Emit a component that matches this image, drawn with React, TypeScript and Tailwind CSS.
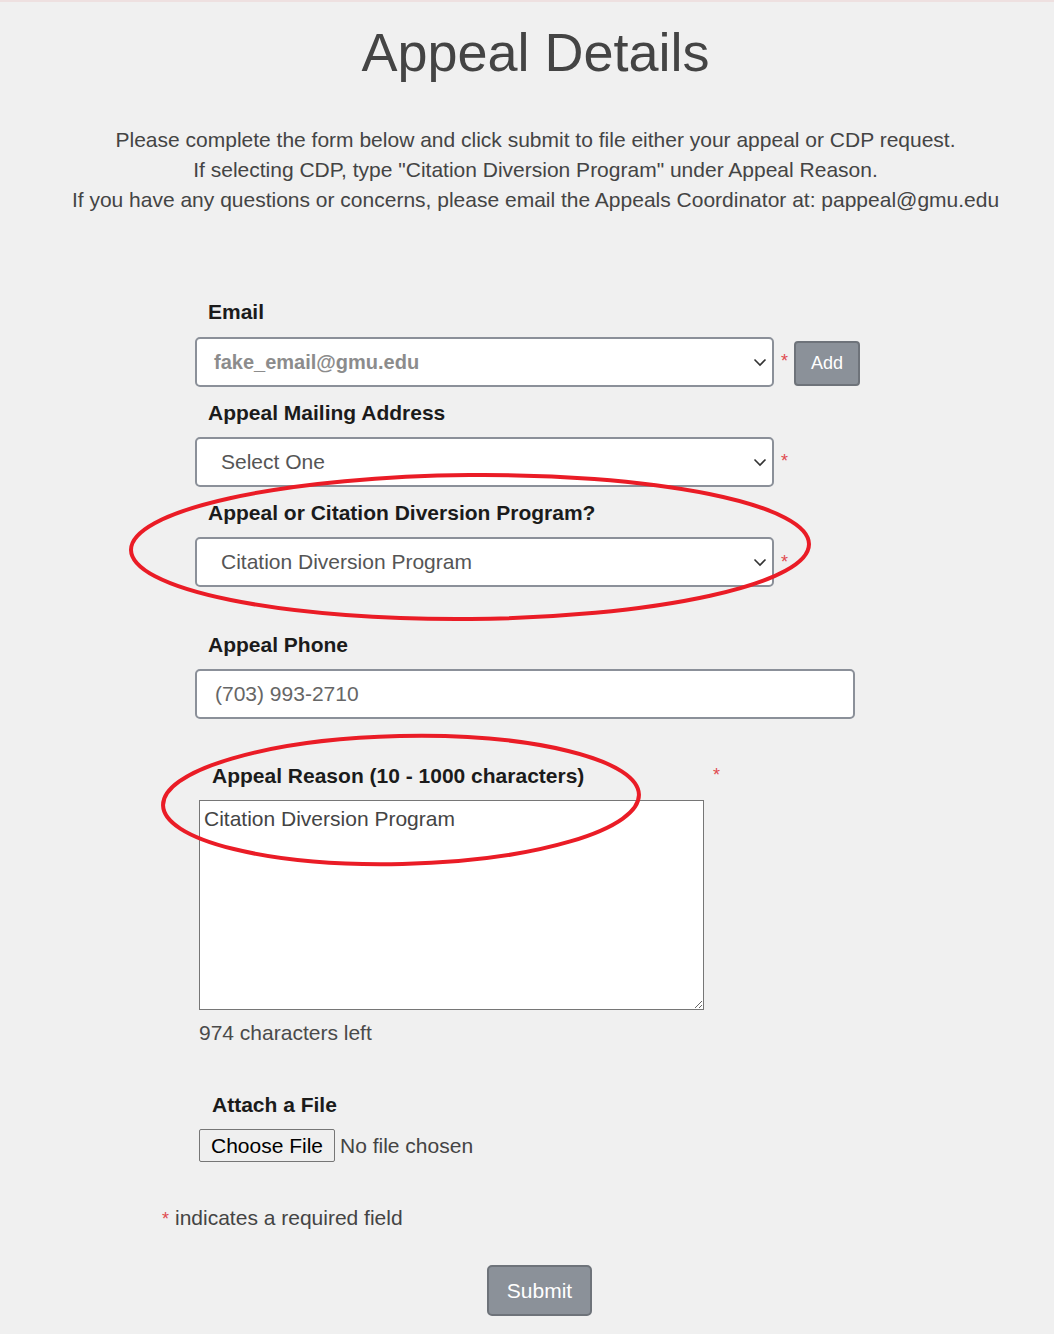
import React from "react";

function Chevron(): React.JSX.Element {
  return (
    <svg width="14" height="9" viewBox="0 0 14 9" fill="none" className="shrink-0">
      <path d="M1.5 1.5 7 7l5.5-5.5" stroke="#333" strokeWidth="1.6" />
    </svg>
  );
}

function Required({ className = "" }: { className?: string }): React.JSX.Element {
  return <span className={`text-[18px] leading-none text-[#e04a4f] ${className}`}>*</span>;
}

function Label({ children, className = "" }: { children: React.ReactNode; className?: string }) {
  return (
    <div className={`pl-[13px] text-[21px] leading-[24px] font-bold text-[#1b1b1b] ${className}`}>
      {children}
    </div>
  );
}

function FakeSelect({
  value,
  textClass,
}: {
  value: string;
  textClass: string;
}): React.JSX.Element {
  return (
    <div className="flex h-[50px] w-[579px] items-center justify-between rounded-[5px] border-2 border-[#8b9099] bg-white pr-[5px]">
      <span className={textClass}>{value}</span>
      <Chevron />
    </div>
  );
}

export default function App(): React.JSX.Element {
  return (
    <div className="relative min-h-screen bg-[#f0f0f0] pb-[18px] font-['Liberation_Sans',Arial,sans-serif]">
      {/* Top strip */}
      <div className="h-[2px] bg-[#eee0e0]" />

      <h1 className="mt-[23px] pl-[17px] text-center text-[54px] leading-none font-normal text-[#444]">
        Appeal Details
      </h1>

      <div className="mt-[46px] pl-[17px] text-center text-[21px] leading-[30px] text-[#444]">
        <p>Please complete the form below and click submit to file either your appeal or CDP request.</p>
        <p>If selecting CDP, type "Citation Diversion Program" under Appeal Reason.</p>
        <p>If you have any questions or concerns, please email the Appeals Coordinator at: pappeal@gmu.edu</p>
      </div>

      <form className="mt-[85px] pl-[195px]">
        {/* Email */}
        <Label>Email</Label>
        <div className="mt-[13px] flex items-start">
          <FakeSelect value="fake_email@gmu.edu" textClass="pl-[17px] text-[20px] font-bold text-[#8c8c8c]" />
          <Required className="mt-[15px] w-[20px] pl-[7px]" />
          <button
            type="button"
            className="mt-[4px] h-[45px] w-[66px] rounded-[4px] border-2 border-[#6e737a] bg-[#8b9199] text-[18px] text-white"
          >
            Add
          </button>
        </div>

        {/* Mailing address */}
        <Label className="mt-[14px]">Appeal Mailing Address</Label>
        <div className="mt-[12px] flex items-start">
          <FakeSelect value="Select One" textClass="pl-[24px] text-[21px] text-[#555]" />
          <Required className="mt-[15px] pl-[7px]" />
        </div>

        {/* Appeal or CDP */}
        <Label className="mt-[14px]">Appeal or Citation Diversion Program?</Label>
        <div className="mt-[12px] flex items-start">
          <FakeSelect value="Citation Diversion Program" textClass="pl-[24px] text-[21px] text-[#555]" />
          <Required className="mt-[16px] pl-[7px]" />
        </div>

        {/* Phone */}
        <Label className="mt-[46px]">Appeal Phone</Label>
        <div className="mt-[12px] flex h-[50px] w-[660px] items-center rounded-[5px] border-2 border-[#8b9099] bg-white pl-[18px] text-[21px] text-[#666]">
          (703) 993-2710
        </div>

        {/* Appeal reason */}
        <div className="mt-[45px] pl-[4px]">
          <div className="flex w-[525px] items-start">
            <Label className="w-[505px]">Appeal Reason (10 - 1000 characters)</Label>
            <Required className="mt-[2px] pl-[9px]" />
          </div>
          <textarea
            readOnly
            defaultValue="Citation Diversion Program"
            className="mt-[12px] block h-[210px] w-[505px] border border-[#767676] bg-white px-[4px] pt-[6px] text-[21px] leading-[24px] text-[#444] outline-none"
          />
          <div className="mt-[11px] text-[21px] leading-[24px] text-[#4a4a4a]">974 characters left</div>

          <Label className="mt-[48px]">Attach a File</Label>
          <div className="mt-[12px] flex items-center">
            <button
              type="button"
              className="h-[33px] w-[136px] rounded-[2px] border border-[#767676] bg-[#efefef] text-[21px] text-black"
            >
              Choose File
            </button>
            <span className="ml-[5px] text-[21px] text-[#444]">No file chosen</span>
          </div>
        </div>
      </form>

      <div className="mt-[44px] flex items-start pl-[162px] text-[21px] leading-[24px] text-[#444]">
        <Required className="mt-[4px] w-[13px]" />
        <span>indicates a required field</span>
      </div>

      <div className="mt-[35px] pl-[487px]">
        <button
          type="button"
          className="h-[51px] w-[105px] rounded-[5px] border-2 border-[#6e737a] bg-[#8b9199] text-[21px] text-white"
        >
          Submit
        </button>
      </div>

      {/* Red annotation circles */}
      <svg className="pointer-events-none absolute top-0 left-0" width="1054" height="1334">
        <ellipse
          cx="470"
          cy="547"
          rx="339"
          ry="72"
          fill="none"
          stroke="#ea1c26"
          strokeWidth="4"
          transform="rotate(-0.5 470 547)"
        />
        <ellipse
          cx="401"
          cy="800"
          rx="238"
          ry="64"
          fill="none"
          stroke="#ea1c26"
          strokeWidth="4"
          transform="rotate(-1.3 401 800)"
        />
      </svg>
    </div>
  );
}
